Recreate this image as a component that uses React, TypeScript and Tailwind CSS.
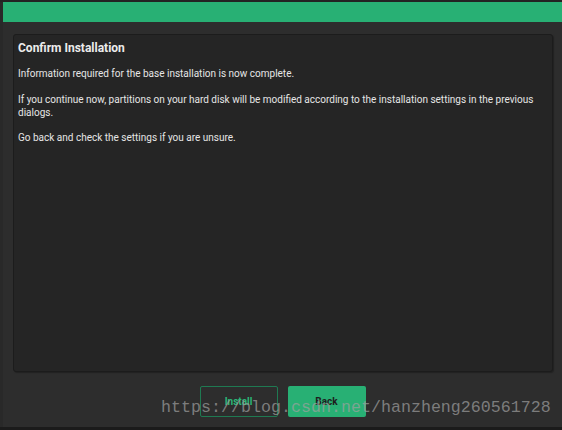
export default function App() {
  return (
    <div
      className="relative w-[562px] h-[430px] flex flex-col bg-[#2d2d2d] overflow-hidden"
      style={{ fontFamily: "Roboto, 'Liberation Sans', sans-serif" }}
    >
      <div className="h-[2px] bg-[#232323] shrink-0" />
      <div className="flex flex-1 min-h-0">
        <div className="w-[3px] bg-[#292929] shrink-0" />
        <div className="flex-1 flex flex-col min-w-0">
          <div className="h-[20px] bg-[#28b074] shrink-0" />
          <div className="ml-[10px] mr-[9px] mt-[12px] h-[338px] rounded-[3px] border border-[#1c1c1c] bg-[#252525] px-[4px] pt-[5px] text-[#e6e6e6] shadow-[1px_1px_1px_rgba(0,0,0,0.25)]">
            <div className="text-[12px] leading-[16px] font-bold text-[#ececec]">Confirm Installation</div>
            <p className="mt-[11px] text-[10px] leading-[13px]">
              Information required for the base installation is now complete.
            </p>
            <p className="mt-[13px] text-[10px] leading-[13px] pr-[10px]">
              If you continue now, partitions on your hard disk will be modified according to the installation settings in the previous dialogs.
            </p>
            <p className="mt-[12px] text-[10px] leading-[13px]">
              Go back and check the settings if you are unsure.
            </p>
          </div>
          <div className="flex justify-center gap-[10px] mt-[14px]">
            <button className="w-[78px] h-[31px] rounded-[2px] border border-[#1f7a52] text-[#2bb878] text-[10px] font-bold">
              Install
            </button>
            <button className="w-[78px] h-[31px] rounded-[2px] bg-[#28b074] text-[#1e1e1e] text-[10px] font-bold">
              Back
            </button>
          </div>
          <div className="flex-1" />
        </div>
      </div>
      <div className="h-[3px] bg-[#1b1b1b] shrink-0" />
      <div
        className="absolute left-[161px] top-[397px] text-[16.67px] leading-[22px] text-[#a0a0a0]/70 whitespace-nowrap pointer-events-none"
        style={{ fontFamily: "'Liberation Mono', monospace" }}
      >
        https://blog.csdn.net/hanzheng260561728
      </div>
    </div>
  );
}
